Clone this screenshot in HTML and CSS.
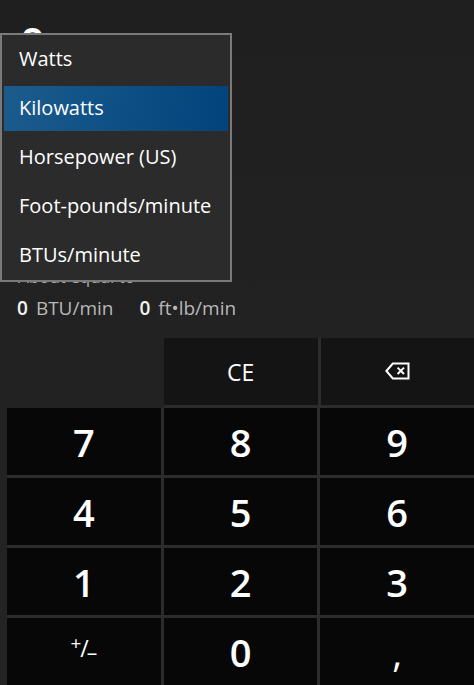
FILE: index.html
```html
<!DOCTYPE html>
<html>
<head>
<meta charset="utf-8">
<link rel="stylesheet" href="styles.css">
</head>
<body>
<div class="app">
  <div class="display">
    <div class="big-value">0</div>
    <div class="spacer"></div>
    <div class="about">About equal to</div>
    <div class="equivs">
      <span class="eq"><b>0</b><span class="unit">BTU/min</span></span>
      <span class="eq second"><b>0</b><span class="unit">ft•lb/min</span></span>
    </div>
  </div>
  <div class="keypad">
    <div class="top-row">
      <div class="blank"></div>
      <div class="top-keys">
        <div class="key op ce">CE</div>
        <div class="key op back">
          <svg class="back-icon" width="25" height="18" viewBox="0 0 25 18">
            <path d="M1.4 9 L7.8 1.5 H23.5 V16.5 H7.8 Z" fill="none" stroke="#fff" stroke-width="2" stroke-linejoin="miter"/>
            <path d="M12.6 5.6 L19 12 M19 5.6 L12.6 12" stroke="#fff" stroke-width="2"/>
          </svg>
        </div>
      </div>
    </div>
    <div class="digits">
      <div class="key num">7</div>
      <div class="key num">8</div>
      <div class="key num">9</div>
      <div class="key num">4</div>
      <div class="key num">5</div>
      <div class="key num">6</div>
      <div class="key num">1</div>
      <div class="key num">2</div>
      <div class="key num">3</div>
      <div class="key num pm"><span class="pm-plus">+</span><span class="pm-slash">/</span><span class="pm-minus">–</span></div>
      <div class="key num">0</div>
      <div class="key num comma">,</div>
    </div>
  </div>
  <ul class="menu">
    <li class="item"><span class="label">Watts</span></li>
    <li class="item selected"><span class="label">Kilowatts</span></li>
    <li class="item"><span class="label">Horsepower (US)</span></li>
    <li class="item"><span class="label">Foot-pounds/minute</span></li>
    <li class="item"><span class="label">BTUs/minute</span></li>
  </ul>
</div>
</body>
</html>
```
FILE: styles.css
```css
* { box-sizing: border-box; }
html, body {
  margin: 0;
  padding: 0;
  background: #212121;
}
body {
  font-family: "Open Sans", "Noto Sans", sans-serif;
  color: #fff;
}
.app {
  position: relative;
  width: 474px;
  height: 685px;
  overflow: hidden;
  background: linear-gradient(180deg, #1f1f1f 0%, #222 50%, #242424 100%);
}
.display {
  height: 338px;
  display: flex;
  flex-direction: column;
  padding-left: 17px;
  padding-top: 20px;
  padding-bottom: 18px;
}
.big-value {
  font-size: 44px;
  line-height: 44px;
  font-weight: 600;
  margin-left: 3px;
}
.spacer { flex: 1; }
.about {
  font-size: 17px;
  line-height: 22px;
  color: #a8a8a8;
  margin-bottom: 8px;
  margin-left: 1px;
}
.equivs {
  font-size: 19px;
  line-height: 24px;
  display: flex;
}
.eq b {
  font-weight: 600;
  color: #f2f2f2;
}
.unit {
  color: #b8b8b8;
  margin-left: 8px;
}
.second { margin-left: 26px; }

.keypad {
  display: flex;
  flex-direction: column;
}
.top-row {
  display: flex;
  height: 70px;
}
.blank { width: 164px; }
.top-keys {
  flex: 1;
  display: grid;
  grid-template-columns: 1fr 1fr;
  column-gap: 3px;
  background: #2c2c2c;
  padding-bottom: 3px;
}
.key {
  display: flex;
  align-items: center;
  justify-content: center;
}
.op {
  background: #141414;
}
.ce {
  font-size: 23px;
}
.back-icon { display: block; margin-left: 1px; margin-top: -2px; }
.digits {
  margin-left: 7px;
  display: grid;
  grid-template-columns: repeat(3, 1fr);
  grid-auto-rows: 67px;
  gap: 3px;
  background: #2c2c2c;
}
.num {
  background: #070707;
  font-size: 38px;
  font-weight: 600;
  line-height: 1;
}
.pm {
  font-weight: 400;
  align-items: center;
  padding-bottom: 6px;
}
.pm-plus {
  font-size: 19px;
  position: relative;
  top: -5px;
}
.pm-slash {
  font-size: 23px;
  margin-left: -1px;
}
.pm-minus {
  font-size: 21px;
  position: relative;
  top: 4px;
  margin-left: -2px;
}
.comma {
  font-weight: 400;
}

.menu {
  position: absolute;
  left: 0;
  top: 33px;
  width: 232px;
  margin: 0;
  padding: 0;
  list-style: none;
  background: #2b2b2b;
  border: 2px solid #7a7a7a;
}
.item {
  height: 49px;
  padding: 2px;
  display: flex;
}
.label {
  flex: 1;
  display: flex;
  align-items: center;
  padding-left: 15px;
  padding-bottom: 2px;
  font-size: 20px;
  color: #fff;
}
.selected .label {
  background: linear-gradient(100deg, #1c5b8c 0%, #0d4f85 55%, #01437a 100%);
}
```
